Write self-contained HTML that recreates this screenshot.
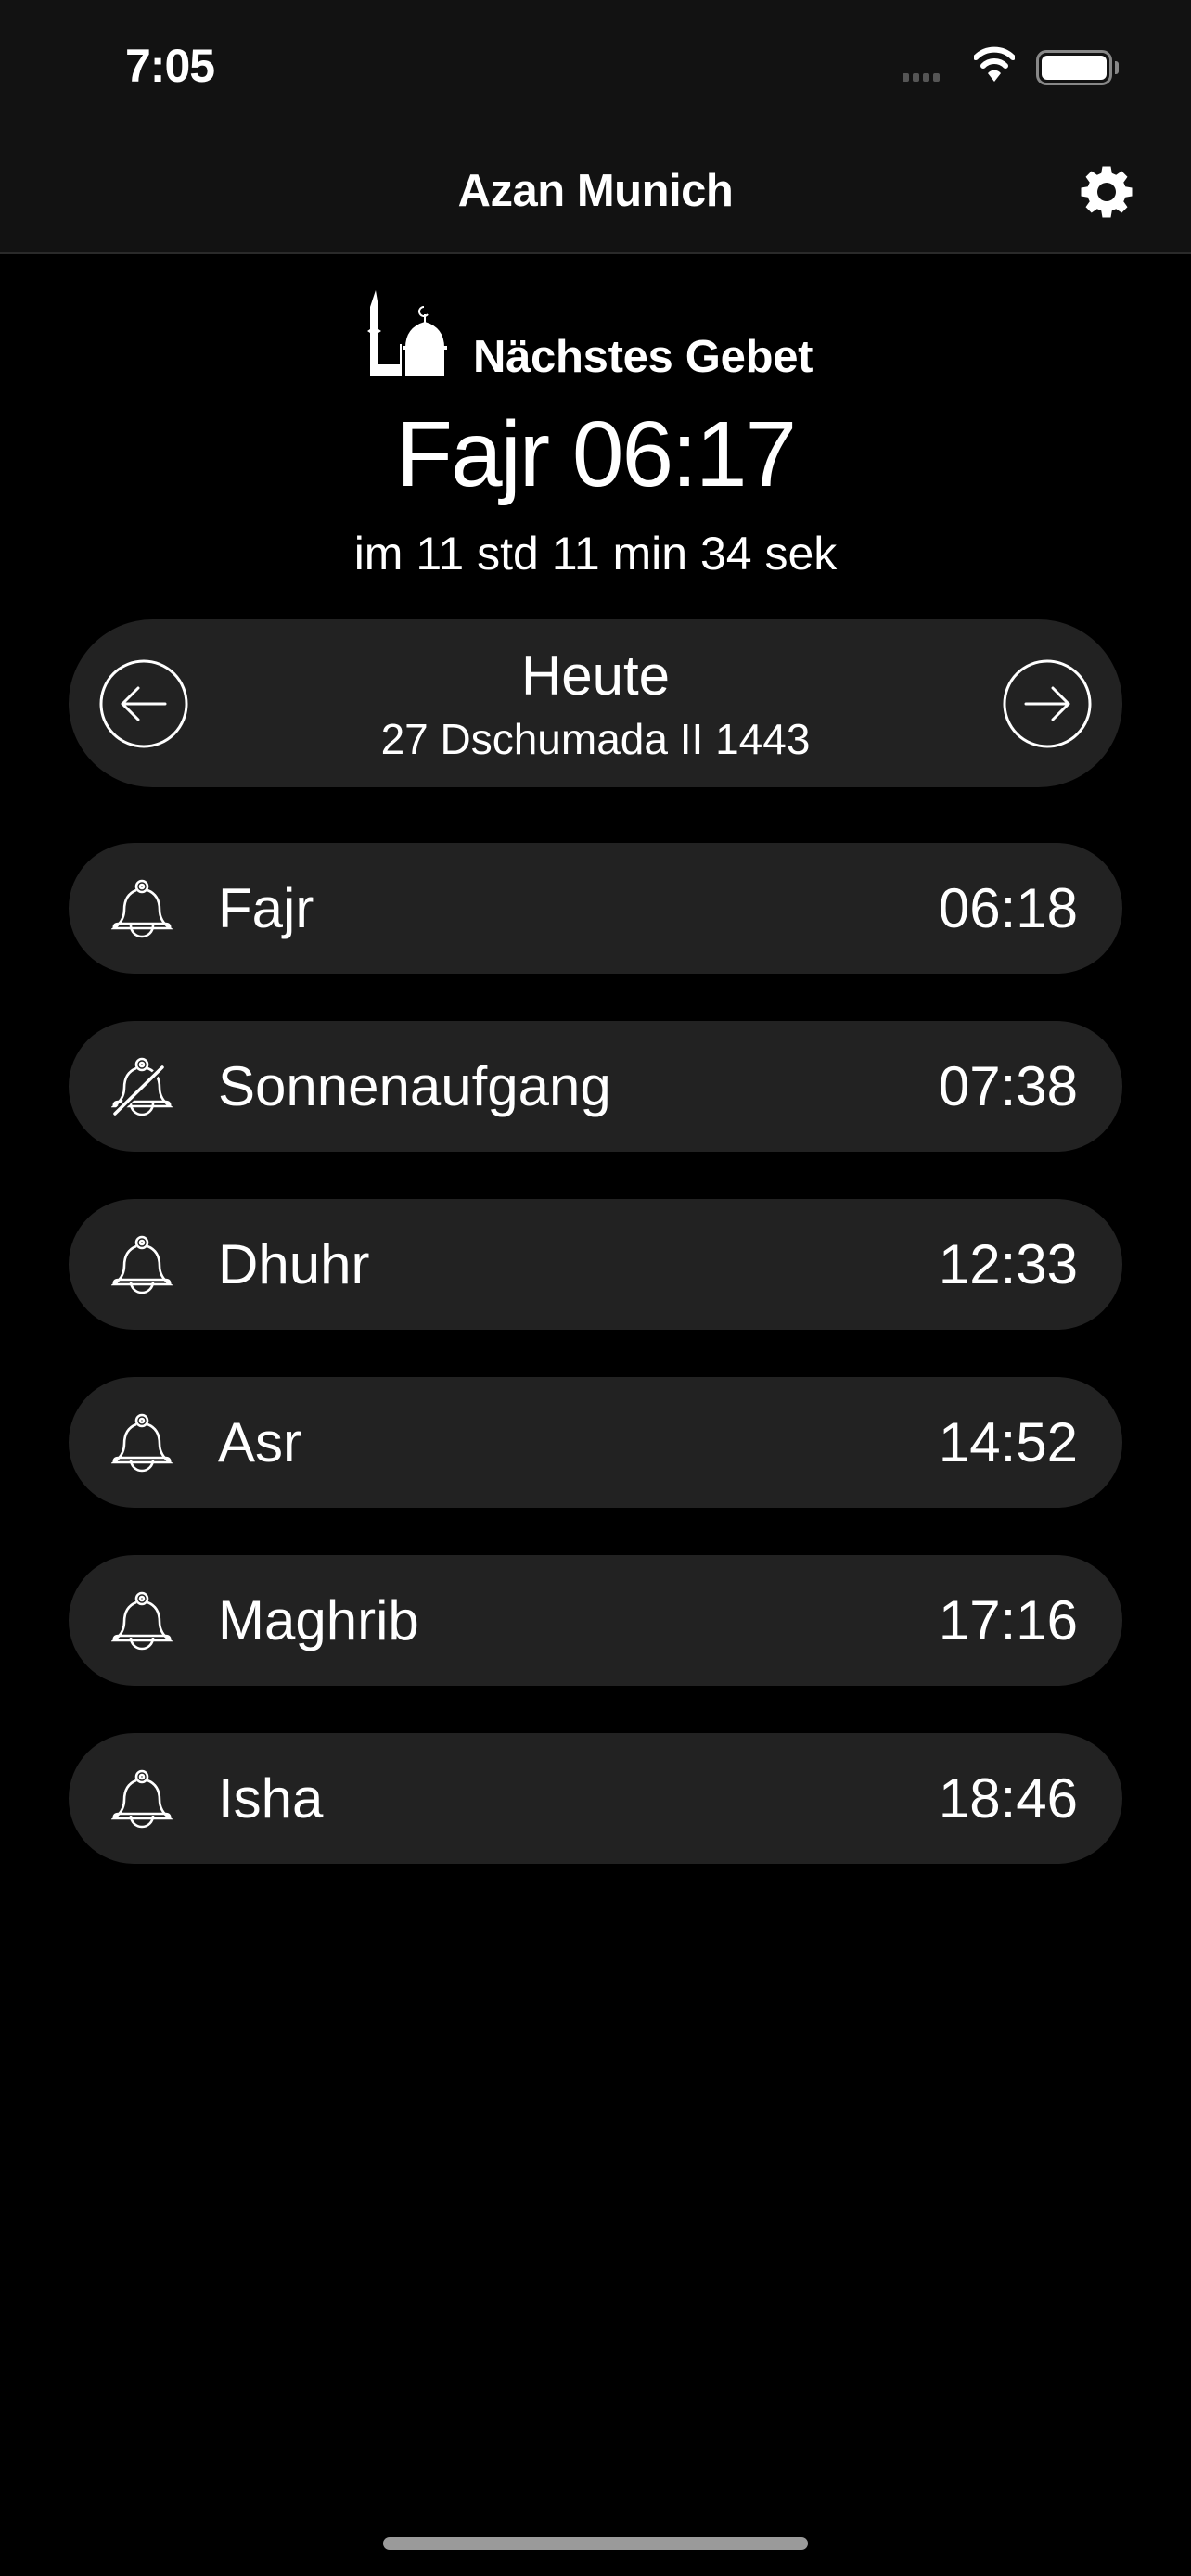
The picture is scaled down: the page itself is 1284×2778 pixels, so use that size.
<!DOCTYPE html>
<html><head><meta charset="utf-8"><style>
*{margin:0;padding:0;box-sizing:border-box}
body{width:1284px;height:2778px;background:#000;font-family:"Liberation Sans",sans-serif;color:#fff;position:relative;overflow:hidden}
.top{position:absolute;left:0;top:0;width:1284px;height:274px;background:#121212;border-bottom:2px solid #2a2a2a}
.abs{position:absolute}
.c{position:absolute;left:0;width:1284px;text-align:center;white-space:nowrap}
.card{position:absolute;left:74px;width:1136px;background:#222;border-radius:80px}
.row{height:141px}
.row .n{position:absolute;left:161px;top:0;line-height:141px;font-size:60px}
.row .t{position:absolute;right:48px;top:0;line-height:141px;font-size:60px}
.row svg{position:absolute;left:46px;top:36px}
</style></head><body>
<div class="top"></div>
<div class="abs" style="left:135px;top:42px;font-size:50px;font-weight:bold;letter-spacing:-1px">7:05</div>
<div class="abs" style="left:973px;top:79px;">
<span class="abs" style="left:0;top:0;width:7px;height:9px;background:#555;border-radius:2px"></span>
<span class="abs" style="left:11px;top:0;width:7px;height:9px;background:#555;border-radius:2px"></span>
<span class="abs" style="left:22px;top:0;width:7px;height:9px;background:#555;border-radius:2px"></span>
<span class="abs" style="left:33px;top:0;width:7px;height:9px;background:#555;border-radius:2px"></span>
</div>
<svg class="abs" style="left:1050px;top:48px" width="44" height="42" viewBox="0 0 44 42">
<path d="M2 14 A28 28 0 0 1 42 14" stroke="#fff" stroke-width="6" fill="none" stroke-linecap="round"/>
<path d="M10 23 A17 17 0 0 1 34 23" stroke="#fff" stroke-width="6" fill="none" stroke-linecap="round"/>
<path d="M22 40 L15 31 A9 9 0 0 1 29 31 Z" fill="#fff"/>
</svg>
<div class="abs" style="left:1117px;top:54px;width:82px;height:38px;border:3px solid #888;border-radius:11px;padding:3px"><div style="width:100%;height:100%;background:#fff;border-radius:6px"></div></div>
<div class="abs" style="left:1202px;top:66px;width:4px;height:14px;background:#888;border-radius:0 3px 3px 0"></div>
<div class="c" style="top:178px;font-size:49px;font-weight:bold;letter-spacing:-0.5px">Azan Munich</div>
<svg class="abs" style="left:1163px;top:177px" width="60" height="60" viewBox="0 0 24 24">
<path fill="#fff" fill-rule="evenodd" d="M10.2 1h3.6l.5 2.9 1.8.8 2.4-1.7 2.5 2.5-1.7 2.4.8 1.8 2.9.5v3.6l-2.9.5-.8 1.8 1.7 2.4-2.5 2.5-2.4-1.7-1.8.8-.5 2.9h-3.6l-.5-2.9-1.8-.8-2.4 1.7-2.5-2.5 1.7-2.4-.8-1.8L1 13.8v-3.6l2.9-.5.8-1.8L3 5.5 5.5 3l2.4 1.7 1.8-.8zM12 8a4 4 0 1 0 0 8 4 4 0 1 0 0-8z"/>
</svg>
<svg class="abs" style="left:395px;top:313px" width="90" height="94" viewBox="0 0 90 94">
<path fill="#fff" d="M10 0 L13 18 L13 42 L16 44 L13 46 L13 80 L36 80 L36 58 L38 58 L38 92 L4 92 L4 46 L1 44 L4 42 L4 18 Z"/>
<path fill="#fff" d="M42 92 L42 62 Q42 40 63 34 Q84 40 84 62 L84 92 Z"/>
<path d="M62 18 A5 5 0 1 0 66 26" stroke="#fff" stroke-width="2" fill="none"/>
<rect x="62" y="26" width="2" height="9" fill="#fff"/>
<rect x="39" y="60" width="48" height="4" fill="#fff"/>
</svg>
<div class="abs" style="left:510px;top:357px;font-size:49px;font-weight:bold;letter-spacing:-0.3px">Nächstes Gebet</div>
<div class="c" style="top:433px;font-size:100px;letter-spacing:-2px">Fajr 06:17</div>
<div class="c" style="top:568px;font-size:50px">im 11 std 11 min 34 sek</div>
<div class="card" style="top:668px;height:181px;border-radius:91px">
<svg class="abs" style="left:32px;top:42px" width="98" height="98" viewBox="0 0 98 98"><circle cx="49" cy="49" r="46" stroke="#fff" stroke-width="3" fill="none"/><path d="M26 49H72M43 32L26 49L43 66" stroke="#fff" stroke-width="3" fill="none" stroke-linecap="round" stroke-linejoin="round"/></svg>
<svg class="abs" style="left:1006px;top:42px" width="98" height="98" viewBox="0 0 98 98"><circle cx="49" cy="49" r="46" stroke="#fff" stroke-width="3" fill="none"/><path d="M26 49H72M55 32L72 49L55 66" stroke="#fff" stroke-width="3" fill="none" stroke-linecap="round" stroke-linejoin="round"/></svg>
<div class="c" style="left:0;width:1136px;top:26px;font-size:60px">Heute</div>
<div class="c" style="left:0;width:1136px;top:102px;font-size:46px">27 Dschumada II 1443</div>
</div>
<div class="card row" style="top:909px"><svg width="66" height="70" viewBox="0 0 66 66"><g stroke="#fff" stroke-width="2.6" fill="none"><circle cx="33" cy="9" r="6"/><circle cx="33" cy="9" r="2"/><path d="M27 13 Q14 18 14 34 Q14 46 3 54 L63 54 Q52 46 52 34 Q52 18 39 13"/><path d="M3 54 Q2 49 8 49 L58 49 Q64 49 63 54"/><path d="M21 51 A12 12 0 0 0 45 51"/></g></svg><div class="n">Fajr</div><div class="t">06:18</div></div>
<div class="card row" style="top:1101px"><svg width="66" height="70" viewBox="0 0 66 66"><g stroke="#fff" stroke-width="2.6" fill="none"><circle cx="33" cy="9" r="6"/><circle cx="33" cy="9" r="2"/><path d="M27 13 Q14 18 14 34 Q14 46 3 54 L63 54 Q52 46 52 34 Q52 18 39 13"/><path d="M3 54 Q2 49 8 49 L58 49 Q64 49 63 54"/><path d="M21 51 A12 12 0 0 0 45 51"/></g><path d="M4 62 L55 12" stroke="#222" stroke-width="8"/><path d="M4 62 L55 12" stroke="#fff" stroke-width="3.5" stroke-linecap="round"/></svg><div class="n">Sonnenaufgang</div><div class="t">07:38</div></div>
<div class="card row" style="top:1293px"><svg width="66" height="70" viewBox="0 0 66 66"><g stroke="#fff" stroke-width="2.6" fill="none"><circle cx="33" cy="9" r="6"/><circle cx="33" cy="9" r="2"/><path d="M27 13 Q14 18 14 34 Q14 46 3 54 L63 54 Q52 46 52 34 Q52 18 39 13"/><path d="M3 54 Q2 49 8 49 L58 49 Q64 49 63 54"/><path d="M21 51 A12 12 0 0 0 45 51"/></g></svg><div class="n">Dhuhr</div><div class="t">12:33</div></div>
<div class="card row" style="top:1485px"><svg width="66" height="70" viewBox="0 0 66 66"><g stroke="#fff" stroke-width="2.6" fill="none"><circle cx="33" cy="9" r="6"/><circle cx="33" cy="9" r="2"/><path d="M27 13 Q14 18 14 34 Q14 46 3 54 L63 54 Q52 46 52 34 Q52 18 39 13"/><path d="M3 54 Q2 49 8 49 L58 49 Q64 49 63 54"/><path d="M21 51 A12 12 0 0 0 45 51"/></g></svg><div class="n">Asr</div><div class="t">14:52</div></div>
<div class="card row" style="top:1677px"><svg width="66" height="70" viewBox="0 0 66 66"><g stroke="#fff" stroke-width="2.6" fill="none"><circle cx="33" cy="9" r="6"/><circle cx="33" cy="9" r="2"/><path d="M27 13 Q14 18 14 34 Q14 46 3 54 L63 54 Q52 46 52 34 Q52 18 39 13"/><path d="M3 54 Q2 49 8 49 L58 49 Q64 49 63 54"/><path d="M21 51 A12 12 0 0 0 45 51"/></g></svg><div class="n">Maghrib</div><div class="t">17:16</div></div>
<div class="card row" style="top:1869px"><svg width="66" height="70" viewBox="0 0 66 66"><g stroke="#fff" stroke-width="2.6" fill="none"><circle cx="33" cy="9" r="6"/><circle cx="33" cy="9" r="2"/><path d="M27 13 Q14 18 14 34 Q14 46 3 54 L63 54 Q52 46 52 34 Q52 18 39 13"/><path d="M3 54 Q2 49 8 49 L58 49 Q64 49 63 54"/><path d="M21 51 A12 12 0 0 0 45 51"/></g></svg><div class="n">Isha</div><div class="t">18:46</div></div>
<div class="abs" style="left:413px;top:2736px;width:458px;height:14px;background:#9a9a9a;border-radius:7px"></div>
</body></html>
